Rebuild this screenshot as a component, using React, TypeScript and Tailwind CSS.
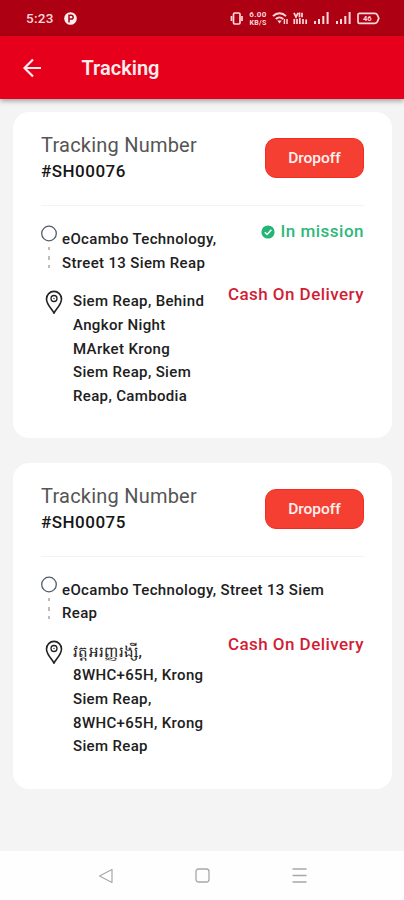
import React from 'react';

interface Shipment {
  code: string;
  from: string[];
  to: string[];
  inMission: boolean;
}

const shipments: Shipment[] = [
  {
    code: '#SH00076',
    from: ['eOcambo Technology,', 'Street 13 Siem Reap'],
    to: ['Siem Reap, Behind', 'Angkor Night', 'MArket Krong', 'Siem Reap, Siem', 'Reap, Cambodia'],
    inMission: true,
  },
  {
    code: '#SH00075',
    from: ['eOcambo Technology, Street 13 Siem', 'Reap'],
    to: ['វត្តអរញ្ញរង្សី,', '8WHC+65H, Krong', 'Siem Reap,', '8WHC+65H, Krong', 'Siem Reap'],
    inMission: false,
  },
];

const SignalIcon = () => (
  <svg width="16" height="13" viewBox="0 0 16 13" fill="currentColor">
    <rect x="0" y="9" width="2" height="3" />
    <rect x="4" y="7" width="2" height="5" />
    <rect x="8.3" y="4" width="2" height="8" />
    <rect x="12.6" y="0" width="2" height="12" />
  </svg>
);

const StatusBar = () => (
  <div className="flex h-9 shrink-0 items-center bg-[#ad0013] pl-[26px] pr-6 text-[#ffd9d9]">
    <span className="text-[13.5px] font-medium tracking-[0.3px]">5:23</span>
    <svg className="ml-[10px]" width="13" height="13" viewBox="0 0 13 13">
      <circle cx="6.5" cy="6.5" r="6.3" fill="#fff0ee" />
      <path d="M5 10.5V3.2h2.2a1.9 1.9 0 0 1 0 3.9H5" fill="none" stroke="#ad0013" strokeWidth="1.5" />
    </svg>
    <div className="ml-auto flex items-center">
      <svg width="14" height="13" viewBox="0 0 14 13" fill="none" stroke="currentColor" strokeWidth="1.7">
        <rect x="3.5" y="1" width="6.5" height="11" rx="1.2" />
        <path d="M1.5 4v5M12 4v5" />
      </svg>
      <div className="ml-[4px] flex w-[20px] flex-col items-center text-[8px] font-bold tracking-[0.3px]">
        <span className="leading-[9px]">6.00</span>
        <span className="text-[7px] leading-[8px]">KB/S</span>
      </div>
      <svg className="ml-[4px]" width="17" height="13" viewBox="0 0 17 13" fill="none" stroke="currentColor" strokeWidth="1.9">
        <path d="M1 4.2C4.8.3 10.2.3 14 4.2M3.8 7C6 4.8 9 4.8 11.2 7" />
        <path d="M5.3 8.5h4.4L7.5 11.5z" fill="currentColor" stroke="none" />
        <path d="M12.4 7v5M15 7v5" strokeWidth="1.4" />
      </svg>
      <svg className="ml-[4px]" width="15" height="13" viewBox="0 0 15 13" fill="none" stroke="currentColor" strokeWidth="1.7">
        <path d="M1 .8 3 5 5 .8M6.5.5v4.8M9 .8v4.5M1.3 7v5M4 7v5M6.8 6v6M10 7v5M13.2 7.5V12" />
      </svg>
      <div className="ml-[6px] flex gap-[6px]">
        <SignalIcon />
        <SignalIcon />
      </div>
      <svg className="ml-[5px]" width="23" height="13" viewBox="0 0 23 13" fill="none" stroke="currentColor" strokeWidth="1.7">
        <path d="M2.5 1.3h15.3c1.3 0 2 .5 2.5 1.6l1.5 3.3-1.5 3.6c-.4 1.1-1.2 1.6-2.5 1.6H2.5A1.5 1.5 0 0 1 1 9.9V2.8a1.5 1.5 0 0 1 1.5-1.5z" />
        <text x="6" y="9" fontSize="7.5" fontWeight="700" fill="currentColor" stroke="none">46</text>
      </svg>
    </div>
  </div>
);

const PinIcon = () => (
  <svg className="shrink-0" width="18" height="25" viewBox="0 0 18 25" fill="none" stroke="#222">
    <path d="M9 23.2C7.3 19.3 1.5 14.6 1.5 8.9a7.5 7.5 0 0 1 15 0c0 5.700-5.800 10.400-7.500 14.300z" strokeWidth="1.6" strokeLinejoin="round" />
    <circle cx="9" cy="8.5" r="3" strokeWidth="1.3" />
    <circle cx="9" cy="8.5" r="0.8" fill="#555" stroke="none" />
  </svg>
);

const CheckIcon = () => (
  <svg width="14" height="14" viewBox="0 0 14 14">
    <circle cx="7" cy="7" r="6.6" fill="#22b573" />
    <path d="m3.8 7.2 2.3 2.3 4.3-4.7" fill="none" stroke="#fff" strokeWidth="1.5" />
  </svg>
);

const ShipmentCard: React.FC<{ shipment: Shipment }> = ({ shipment }) => (
  <section className="h-[326px] rounded-[16px] bg-white px-7 pt-[20px]">
    <div className="flex h-[74px] items-start justify-between border-b border-[#f3f3f3]">
      <div className="whitespace-nowrap">
        <h2 className="text-[20px] leading-[26px] tracking-[0.22px] text-[#555]">Tracking Number</h2>
        <p className="text-[17px] font-medium leading-[27px] tracking-[0.5px] text-[#161616]">{shipment.code}</p>
      </div>
      <button className="mt-[6px] h-10 w-[99px] rounded-[11px] border border-[#f02d20] bg-[#f63f33] pt-[2px] text-[15.5px] font-medium text-[#fff3f0]">
        Dropoff
      </button>
    </div>

    <div className="flex justify-between">
      <div className="flex pt-[19px]">
        <svg className="shrink-0" width="16" height="46" viewBox="0 0 16 46" fill="none">
          <circle cx="8" cy="8.5" r="7.3" stroke="#555b66" strokeWidth="1.3" />
          <path d="M8 22v3M8 31v4M8 40v3" stroke="#999" strokeWidth="1.3" />
        </svg>
        <div className="ml-[5px] mt-[3px] whitespace-nowrap text-[15px] font-medium leading-[23.6px] tracking-[0.35px] text-[#202020]">
          {shipment.from.map((line) => (
            <p key={line}>{line}</p>
          ))}
        </div>
      </div>
      {shipment.inMission && (
        <div className="mt-[14px] flex h-6 items-center gap-[5px] whitespace-nowrap text-[17px] font-medium tracking-[0.5px] text-[#2fb87c]">
          <CheckIcon />
          <span>In mission</span>
        </div>
      )}
    </div>

    <div className="flex items-start justify-between pl-1 pt-[14.5px]">
      <div className="flex">
        <PinIcon />
        <div className="ml-[10px] mt-[0.5px] whitespace-nowrap text-[15px] font-medium leading-[23.7px] tracking-[0.35px] text-[#202020]">
          {shipment.to.map((line, index) => (
            <p key={index} className="h-[23.7px]">{line}</p>
          ))}
        </div>
      </div>
      <span className="-mt-[8px] whitespace-nowrap text-[17px] font-medium leading-6 tracking-[0.45px] text-[#d21d35]">
        Cash On Delivery
      </span>
    </div>
  </section>
);

export default function App() {
  return (
    <div className="flex h-[900px] w-[404px] flex-col overflow-hidden bg-[#f4f4f4] font-[Roboto,'Noto_Sans',sans-serif]">
      <StatusBar />
      <header className="z-10 flex h-[63px] shrink-0 items-center bg-[#e6001c] pl-[23px] text-[#ffecec] shadow-[0_2px_5px_rgba(0,0,0,0.35)]">
        <svg width="19" height="20" viewBox="0 0 19 20" fill="none" stroke="currentColor" strokeWidth="2.2">
          <path d="M18 10H2M10 1.5 1.5 10l8.5 8.5" />
        </svg>
        <h1 className="ml-[39.5px] mt-[1px] text-[20px] font-semibold">Tracking</h1>
      </header>

      <main className="flex flex-1 flex-col gap-[24.5px] pl-[13px] pr-3 pt-[13px]">
        {shipments.map((shipment) => (
          <ShipmentCard key={shipment.code} shipment={shipment} />
        ))}
      </main>

      <nav className="flex h-[49px] shrink-0 items-center justify-between bg-[#fefefe] pl-[98px] pr-[97px] text-[#a8a8a8]">
        <svg width="15" height="16" viewBox="0 0 15 16" fill="none" stroke="currentColor" strokeWidth="1.2">
          <path d="M14 1.5v13L1.5 8z" strokeLinejoin="round" />
        </svg>
        <svg width="15" height="15" viewBox="0 0 15 15" fill="none" stroke="currentColor" strokeWidth="1.3">
          <rect x="1" y="1" width="13" height="13" rx="2.5" />
        </svg>
        <svg width="15" height="15" viewBox="0 0 15 15" fill="none" stroke="currentColor" strokeWidth="1.3">
          <path d="M.5 1h14M.5 7.5h14M.5 14h14" />
        </svg>
      </nav>
    </div>
  );
}
